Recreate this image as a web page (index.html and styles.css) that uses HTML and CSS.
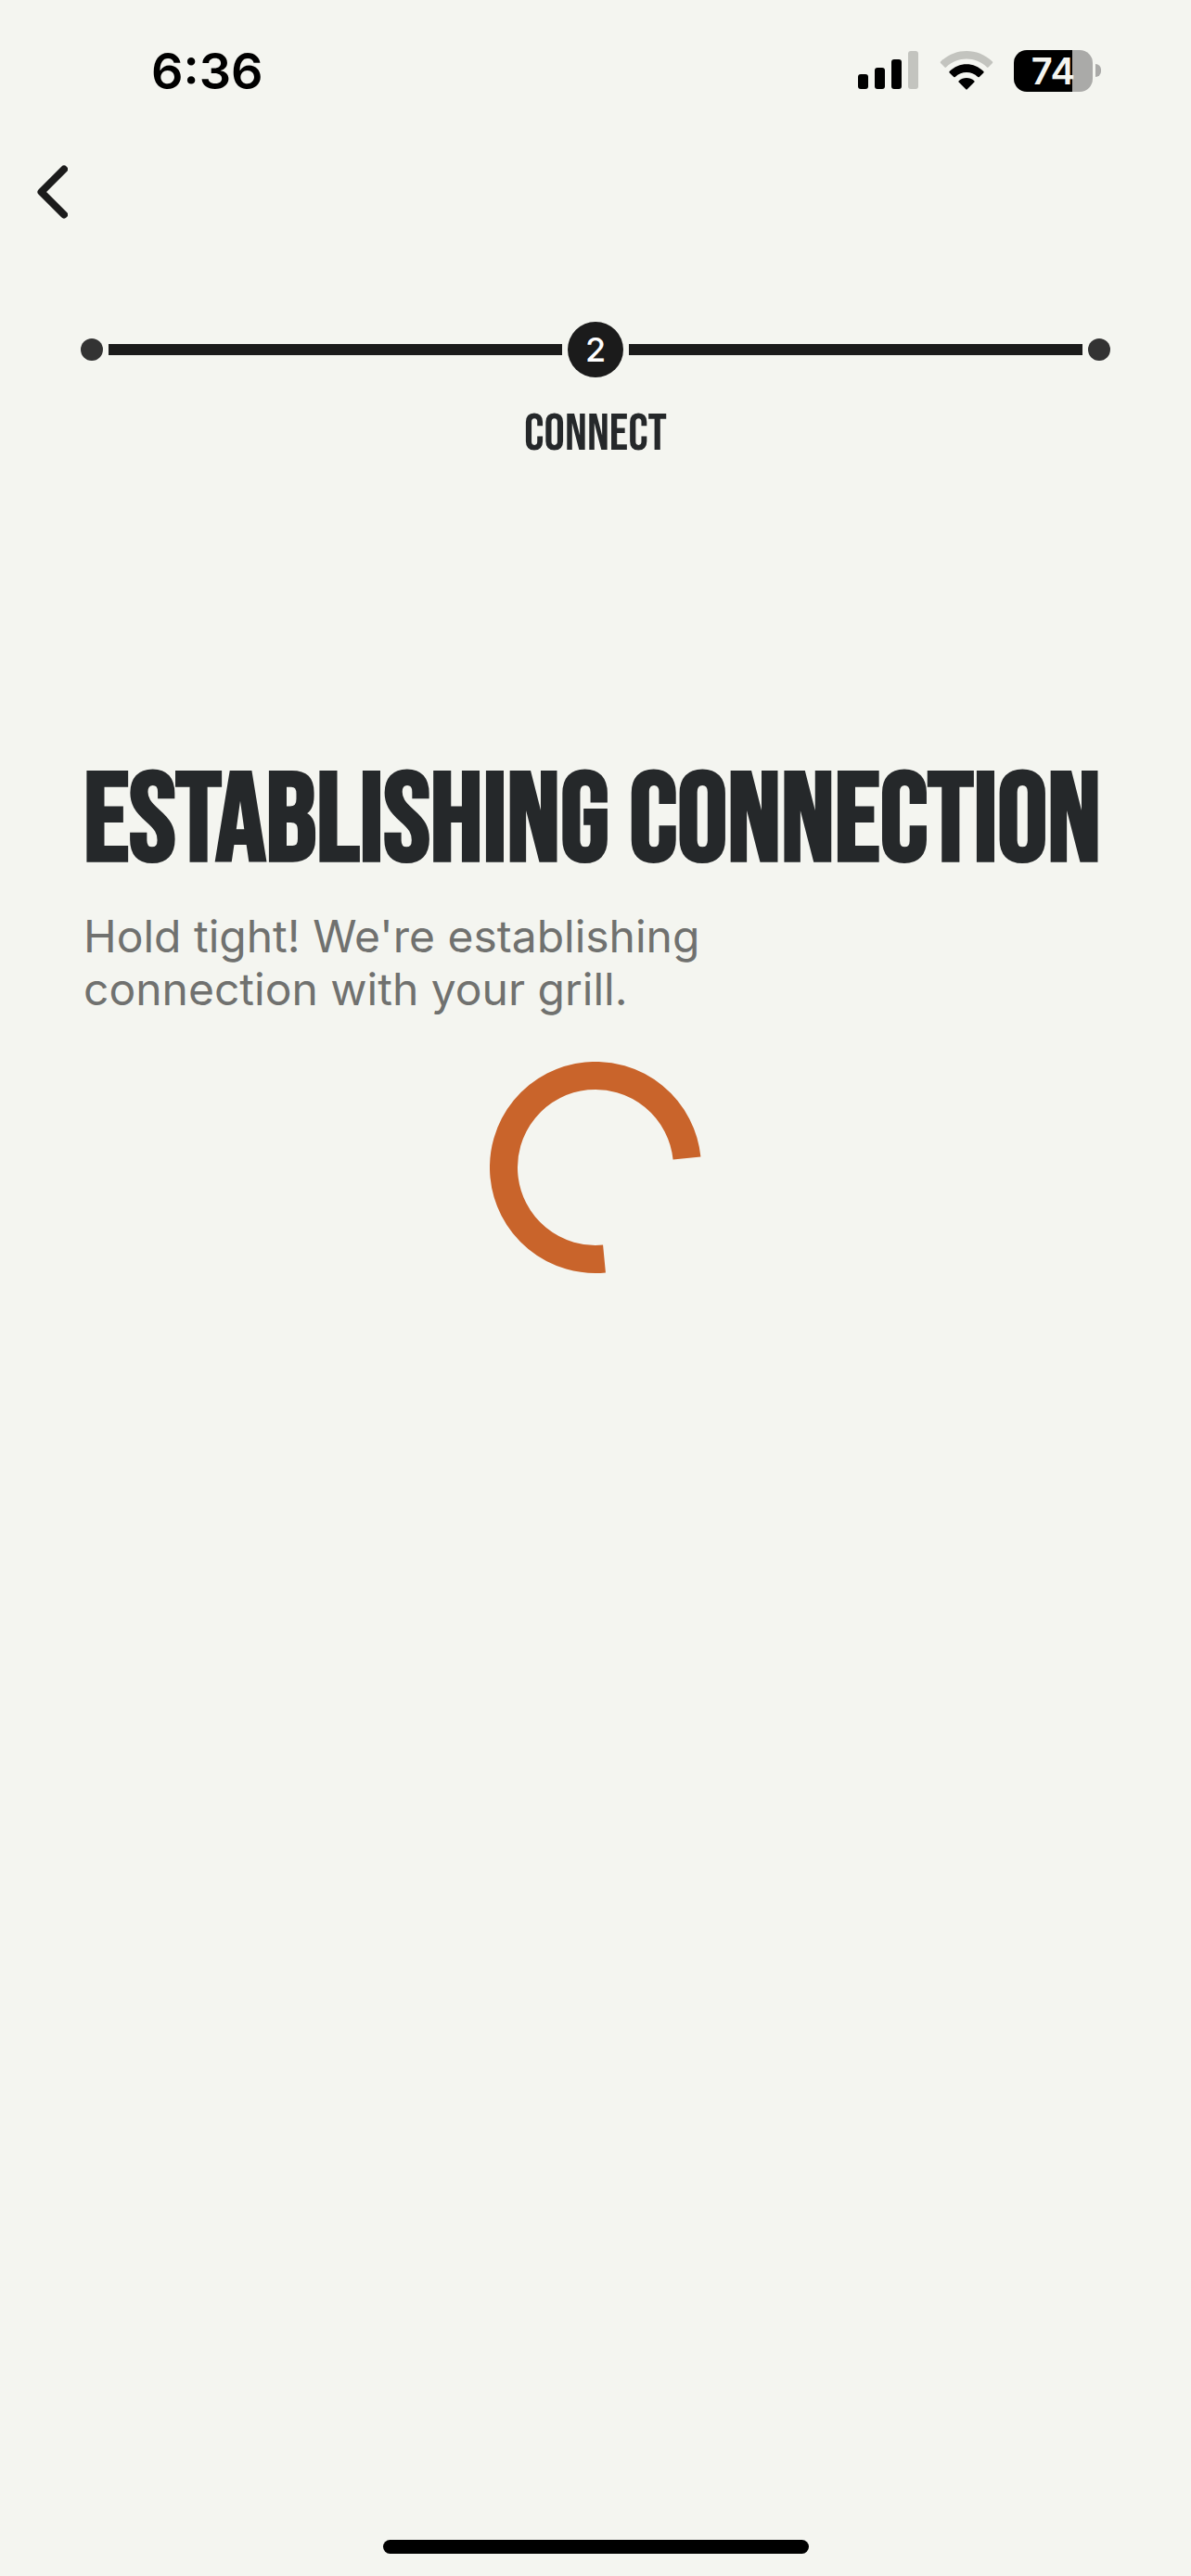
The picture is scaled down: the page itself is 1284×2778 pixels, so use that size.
FILE: index.html
```html
<!DOCTYPE html>
<html lang="en">
<head>
    <meta charset="UTF-8">
    <meta name="viewport" content="width=device-width, initial-scale=1.0">
    <title>Establishing Connection</title>
    <link rel="stylesheet" href="styles.css">
</head>
<body>
    <div class="status-bar">
        <span class="time">6:36</span>
        <div class="status-icons">
            <svg class="signal" width="66" height="42" viewBox="0 0 66 42">
                <rect x="0" y="25" width="11" height="16" rx="3"/>
                <rect x="18" y="18" width="11" height="23" rx="3"/>
                <rect x="36" y="9" width="11" height="32" rx="3"/>
                <rect class="off" x="54" y="0" width="11" height="41" rx="3"/>
            </svg>
            <svg class="wifi" width="58" height="42" viewBox="0 0 58 42">
                <path class="off" d="M1 11.5C17-3.8 41-3.8 57 11.5Q57.500 12.200 57 13L52.500 17.600Q51.800 18.200 51 17.500C38.500 5.600 19.500 5.600 7 17.500Q6.200 18.200 5.500 17.600L1 13Q.5 12.200 1 11.500Z"/>
                <path d="M10.600 22C21 11.600 37 11.600 47.400 22Q48 22.700 47.400 23.400L42.800 28Q42 28.700 41.200 28C34.500 21.400 23.500 21.400 16.800 28Q16 28.700 15.200 28L10.600 23.400Q10 22.700 10.600 22Z"/>
                <path d="M20.600 32.200C25.500 27.900 32.500 27.900 37.400 32.200Q38 32.900 37.400 33.600L29.700 41.300Q29 42 28.300 41.300L20.600 33.600Q20 32.900 20.600 32.200Z"/>
            </svg>
            <div class="battery">
                <span class="level">74</span>
                <span class="tip"></span>
            </div>
        </div>
    </div>

    <div class="nav">
        <button class="back" type="button" aria-label="Back">
            <svg width="34" height="58" viewBox="0 0 34 58">
                <path d="M30 4.500L5.500 29L30 53.500"/>
            </svg>
        </button>
    </div>

    <div class="steps">
        <div class="track">
            <span class="dot"></span>
            <span class="line"></span>
            <span class="num">2</span>
            <span class="line"></span>
            <span class="dot"></span>
        </div>
        <p class="step-name">CONNECT</p>
    </div>

    <div class="content">
        <h1>ESTABLISHING CONNECTION</h1>
        <p>Hold tight! We're establishing<br>connection with your grill.</p>
        <svg class="spinner" width="228" height="228" viewBox="-114 -114 228 228">
            <path d="M98.500 -9.900A99 99 0 1 0 9.500 98.500"/>
        </svg>
    </div>

    <div class="home-bar"></div>
</body>
</html>
```

FILE: styles.css
```css
*{
    margin: 0;
    padding: 0;
    box-sizing: border-box;
}
body{
    min-height: 100vh;
    display: flex;
    flex-direction: column;
    background-color: #f4f5f0;
    color: #25282a;
    font-family: Inter, "Liberation Sans", sans-serif;
}
svg{
    display: block;
}

/* status bar */
.status-bar{
    display: flex;
    justify-content: space-between;
    align-items: center;
    height: 152px;
    padding: 0 97px 0 163px;
    color: #000;
}
.time{
    padding-top: 2px;
    font-size: 54px;
    font-weight: 600;
    line-height: 64px;
}
.status-icons{
    display: flex;
    align-items: center;
    gap: 22px;
}
.off{
    fill: #c3c4bf;
}
.battery{
    display: flex;
    align-items: center;
    gap: 3px;
}
.level{
    width: 85px;
    height: 45px;
    border-radius: 14px;
    background: linear-gradient(to right, #000 63px, #aaaaa8 63px);
    color: #f4f5f0;
    font-size: 40px;
    font-weight: 600;
    line-height: 45px;
    text-align: center;
}
.tip{
    width: 6px;
    height: 14px;
    border-radius: 0 6px 6px 0;
    background-color: #aaaaa8;
}

/* back button */
.nav{
    padding: 26px 39px 0;
}
.back{
    display: block;
    border: none;
    background: none;
    cursor: pointer;
}
.back path{
    fill: none;
    stroke: #1b1b1b;
    stroke-width: 8;
    stroke-linecap: round;
    stroke-linejoin: round;
}

/* steps */
.steps{
    padding: 111px 87px 0;
}
.track{
    display: flex;
    align-items: center;
    gap: 6px;
}
.dot{
    width: 24px;
    height: 24px;
    border-radius: 50%;
    background-color: #333;
}
.line{
    flex: 1;
    height: 12px;
    background-color: #1b1b1b;
}
.num{
    width: 60px;
    height: 60px;
    border-radius: 50%;
    background-color: #1b1b1b;
    color: #fff;
    font-size: 36px;
    font-weight: 500;
    line-height: 60px;
    text-align: center;
}
.step-name{
    margin-top: 30px;
    font-family: "Bebas Neue", "Roboto Condensed", "Liberation Sans", sans-serif;
    font-size: 56px;
    line-height: 64px;
    text-align: center;
}

/* content */
.content{
    flex: 1;
    padding: 325px 90px 0;
}
.content h1{
    font-family: "Bebas Neue", "Roboto Condensed", "Liberation Sans", sans-serif;
    font-size: 135px;
    font-weight: 700;
    line-height: 124px;
    white-space: nowrap;
}
.content p{
    margin-top: 31px;
    color: #70716f;
    font-size: 48px;
    line-height: 57px;
}
.spinner{
    margin: 50px auto 0;
}
.spinner path{
    fill: none;
    stroke: #c9642b;
    stroke-width: 30;
}

.home-bar{
    width: 459px;
    height: 15px;
    margin: 0 auto 24px;
    border-radius: 8px;
    background-color: #000;
}
```
